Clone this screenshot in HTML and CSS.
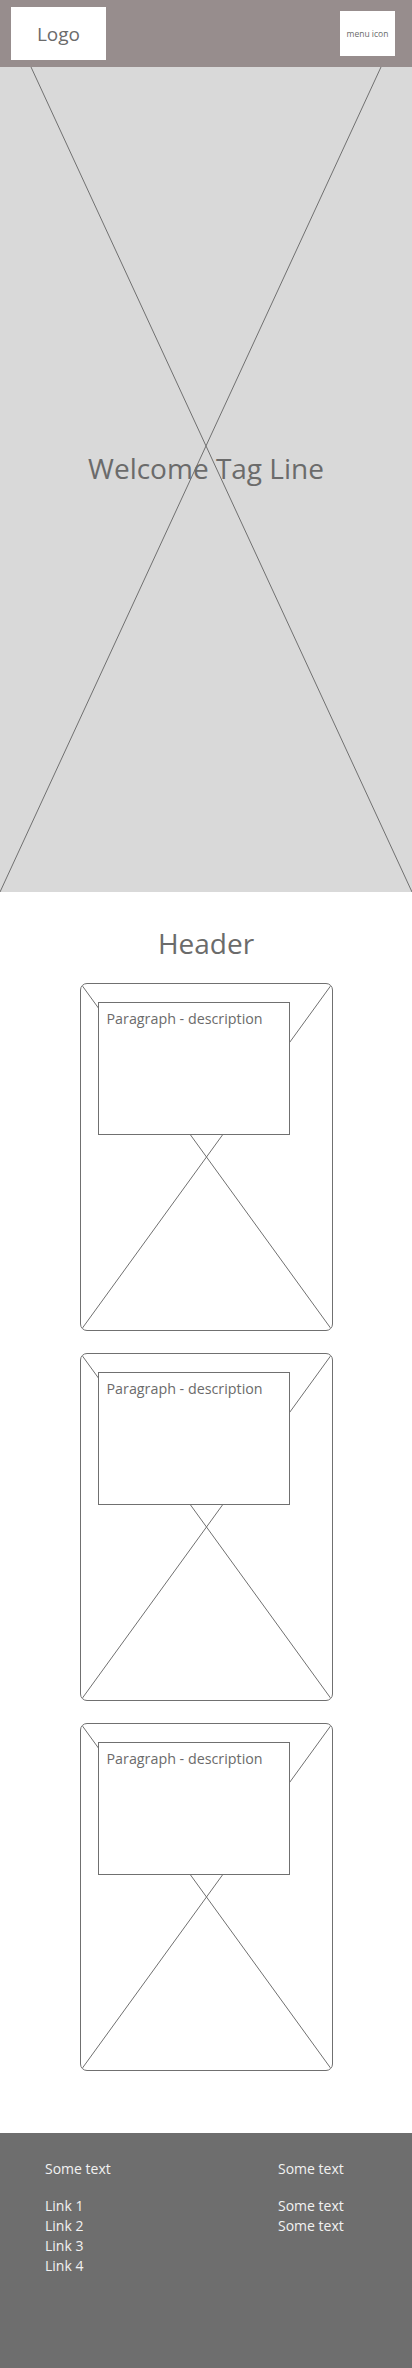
FILE: index.html
```html
<!DOCTYPE html>
<html lang="en">
<head>
    <meta charset="UTF-8">
    <meta name="viewport" content="width=device-width, initial-scale=1.0">
    <title>Landing Wireframe</title>
    <link rel="stylesheet" href="styles.css">
</head>
<body>
    <header class="topbar">
        <div class="logo">Logo</div>
        <div class="menu-icon">menu icon</div>
    </header>

    <section class="hero">
        <svg class="cross" viewBox="0 0 412 825" preserveAspectRatio="none">
            <line x1="31" y1="0" x2="412" y2="825"></line>
            <line x1="381" y1="0" x2="0" y2="825"></line>
        </svg>
        <h1>Welcome Tag Line</h1>
    </section>

    <main class="content">
        <h2>Header</h2>

        <div class="cards">
            <div class="card">
                <svg class="cross" viewBox="0 0 253 348" preserveAspectRatio="none">
                    <line x1="0" y1="0" x2="253" y2="348"></line>
                    <line x1="253" y1="0" x2="0" y2="348"></line>
                </svg>
                <div class="card-text">Paragraph - description</div>
            </div>
            <div class="card">
                <svg class="cross" viewBox="0 0 253 348" preserveAspectRatio="none">
                    <line x1="0" y1="0" x2="253" y2="348"></line>
                    <line x1="253" y1="0" x2="0" y2="348"></line>
                </svg>
                <div class="card-text">Paragraph - description</div>
            </div>
            <div class="card">
                <svg class="cross" viewBox="0 0 253 348" preserveAspectRatio="none">
                    <line x1="0" y1="0" x2="253" y2="348"></line>
                    <line x1="253" y1="0" x2="0" y2="348"></line>
                </svg>
                <div class="card-text">Paragraph - description</div>
            </div>
        </div>
    </main>

    <footer class="footer">
        <div class="footer-col left">
            <p>Some text</p>
            <ul>
                <li>Link 1</li>
                <li>Link 2</li>
                <li>Link 3</li>
                <li>Link 4</li>
            </ul>
        </div>
        <div class="footer-col">
            <p>Some text</p>
            <ul>
                <li>Some text</li>
                <li>Some text</li>
            </ul>
        </div>
    </footer>
</body>
</html>
```

FILE: styles.css
```css
body {
    margin: 0;
    font-family: "Open Sans", Arial, sans-serif;
    color: #6b6b6b;
    background-color: #ffffff;
}
.topbar {
    height: 67px;
    display: flex;
    align-items: center;
    justify-content: space-between;
    padding: 0 17px 0 11px;
    background-color: #978d8d;
}
.logo {
    width: 95px;
    height: 53px;
    display: flex;
    align-items: center;
    justify-content: center;
    background-color: #ffffff;
    font-size: 19px;
}
.menu-icon {
    width: 55px;
    height: 45px;
    display: flex;
    align-items: center;
    justify-content: center;
    background-color: #ffffff;
    font-size: 8.5px;
}
.hero {
    position: relative;
    height: 825px;
    background-color: #d9d9d9;
    box-sizing: border-box;
    padding-top: 381px;
}
.cross {
    position: absolute;
    top: 0;
    left: 0;
    width: 100%;
    height: 100%;
}
.cross line {
    stroke: #707070;
    stroke-width: 1;
    vector-effect: non-scaling-stroke;
}
.hero h1 {
    position: relative;
    margin: 0;
    text-align: center;
    font-size: 28px;
    font-weight: normal;
    line-height: 40px;
}
.content {
    padding: 31px 0 62px;
}
.content h2 {
    margin: 0 0 20px;
    text-align: center;
    font-size: 28px;
    font-weight: normal;
    line-height: 40px;
}
.cards {
    display: flex;
    flex-direction: column;
    align-items: center;
    gap: 22px;
}
.card {
    position: relative;
    width: 253px;
    height: 348px;
    box-sizing: border-box;
    border: 1px solid #707070;
    border-radius: 7px;
    overflow: hidden;
}
.card-text {
    position: relative;
    width: 192px;
    height: 133px;
    box-sizing: border-box;
    margin: 18px 0 0 17px;
    padding: 6px 8px;
    border: 1px solid #707070;
    background-color: #ffffff;
    font-size: 14.3px;
    line-height: 20px;
}
.footer {
    height: 235px;
    box-sizing: border-box;
    display: flex;
    padding: 26px 45px 0;
    background-color: #6e6e6e;
    color: #f2f2f2;
    font-size: 14px;
    line-height: 20px;
}
.footer-col.left {
    width: 233px;
}
.footer p {
    margin: 0 0 17px;
}
.footer ul {
    margin: 0;
    padding: 0;
    list-style: none;
}
```
